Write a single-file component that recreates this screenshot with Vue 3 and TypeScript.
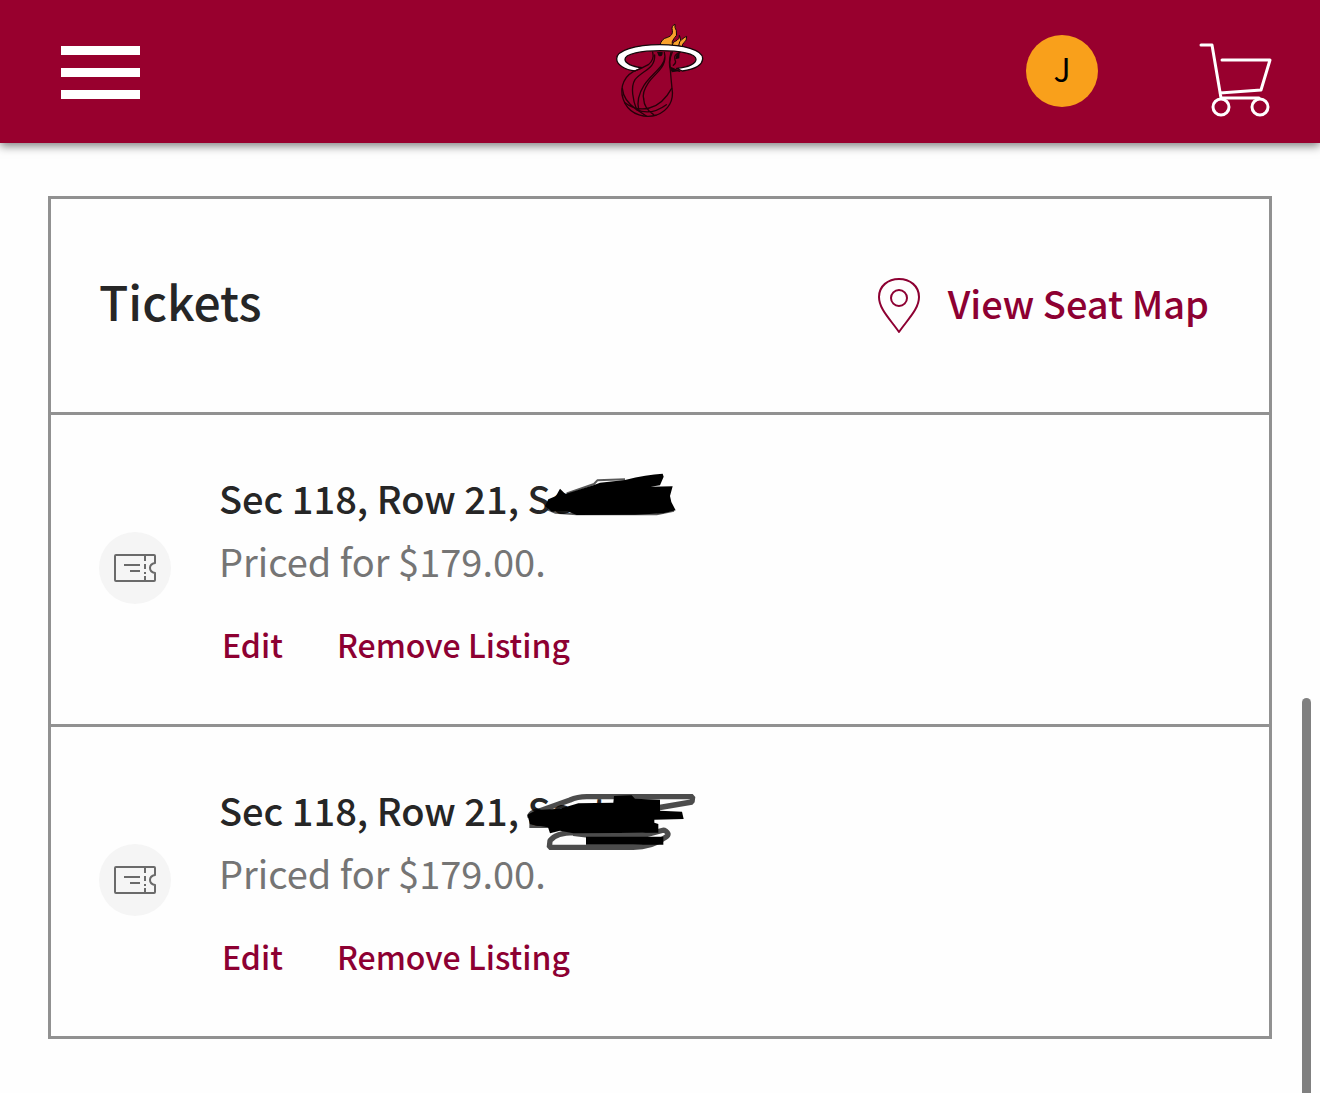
<script setup lang="ts">
interface Stroke {
  d: string
  width: number
  opacity: number
}

interface Ticket {
  id: number
  seat: string
  price: string
  viewBox: string
  marks: Stroke[]
  fills: string[]
}

const tickets: Ticket[] = [
  {
    id: 1,
    seat: 'Sec 118, Row 21, Seat',
    price: '$179.00',
    viewBox: '0 0 600 240',
    marks: [
      { d: 'M112 148 L135 158 L200 163 L440 163 L492 152', width: 6, opacity: 0.65 },
      { d: 'M170 100 L252 72 L262 61 L345 58', width: 6, opacity: 0.65 },
    ],
    fills: [
      'M105 138 L115 118 L138 108 L150 86 L166 102 L250 76 L270 68 L345 60 Q410 43 458 41 L461 50 L450 76 L422 80 L488 79 L480 108 L484 126 L497 151 L460 160 L375 164 L200 165 L172 154 L125 155 Z',
    ],
  },
  {
    id: 2,
    seat: 'Sec 118, Row 21, Seat',
    price: '$179.00',
    viewBox: '0 -24 600 240',
    marks: [
      { d: 'M60 112 Q58 96 90 92 L180 60 Q202 50 230 50 L548 50 L546 66 L440 84', width: 16, opacity: 0.7 },
      { d: 'M58 136 L120 136', width: 16, opacity: 0.7 },
      { d: 'M190 160 L240 166 L400 166 L462 150 Q484 162 466 172 Q425 202 370 202 L118 202 L120 182 Q140 156 200 158', width: 16, opacity: 0.7 },
      { d: 'M228 182 L460 182', width: 24, opacity: 1 },
    ],
    fills: [
      'M52 104 L80 90 L150 86 L205 70 L310 68 L312 48 L365 46 L375 56 L450 59 L450 92 L516 95 L521 117 L433 119 L433 128 L445 132 L445 158 L190 160 L150 152 L120 160 L114 142 L60 133 Z',
    ],
  },
]
</script>

<template>
  <header class="topbar">
    <button class="icon-button menu" type="button" aria-label="Menu">
      <span class="bar"></span><span class="bar"></span><span class="bar"></span>
    </button>
    <a class="logo" href="#" aria-label="Home">
      <svg viewBox="0 0 360 330" width="120" height="110" fill="none" stroke-linecap="round" stroke-linejoin="round">
        <g fill="#f9a12b" stroke="#15070a" stroke-width="3">
          <path d="M180 91 Q183 71 203 67 Q220 61 217 46 Q213 33 225 28 Q223 38 229 47 Q234 62 221 72 Q214 79 217 91 Z" />
          <path d="M216 91 Q218 79 231 76 Q240 71 238 61 Q247 78 236 92 Z" />
          <path d="M236 92 Q237 78 246 73 Q256 65 260 64 Q261 77 252 83 Q246 87 247 94 Z" />
        </g>
        <path
          d="M126 158 C95 155 75 145 75 133 C75 116 125 107 181 107 C240 107 288 116 288 133 C288 146 265 157 230 160 L247 168 C285 163 308 150 308 130 C308 105 250 89 180 89 C105 89 50 107 50 131 C50 150 75 164 105 168 Z"
          fill="#fff" stroke="#15070a" stroke-width="4"
        />
        <g stroke="#260009" stroke-width="4">
          <path d="M158 111 Q164 134 145 149 Q124 161 101 169 C64 190 57 231 75 265 C94 300 137 311 170 300 C207 286 222 255 216 220 Q213 190 211 165 Q205 142 213 112" />
          <path d="M193 112 C204 157 164 174 144 205 Q126 232 131 252 M195 124 C193 157 154 176 132 211 Q108 249 116 284" />
          <path d="M164 120 C166 163 127 165 105 194 C91 216 99 257 110 284 L139 303" />
          <path d="M67 220 Q70 257 110 284 Q153 303 199 269 M75 263 Q108 289 148 279 Q188 269 215 220 M131 252 Q132 280 161 299" />
          <path d="M217 111 Q203 142 214 166 M211 157 L239 169 M240 112 Q219 119 225 135 Q230 143 220 151" />
        </g>
        <path d="M171 111 L188 111 Q189 127 176 123 Z M229 121 L239 111 L238 130 L226 133 Z" fill="#15070a" />
        <path d="M213 160 L242 168 L215 172 Z" fill="#15070a" />
      </svg>
    </a>
    <nav class="actions" aria-label="Account">
      <button class="icon-button avatar" type="button">J</button>
      <a class="cart" href="#" aria-label="Cart">
        <svg viewBox="0 0 74 76" width="74" height="76" fill="none" stroke="#fff" stroke-width="3" stroke-linecap="round" stroke-linejoin="round">
          <path d="M2 3 H13 L22 56 H60 M23 18 H71 L62 48 L21 51" />
          <circle cx="22" cy="65" r="8" />
          <circle cx="61" cy="65" r="8" />
        </svg>
      </a>
    </nav>
  </header>

  <main class="page">
    <section class="card" aria-labelledby="tickets-title">
      <div class="card-head">
        <h1 id="tickets-title">Tickets</h1>
        <a class="seat-map" href="#">
          <svg viewBox="0 0 42 56" width="42" height="56" fill="none" stroke="currentColor" stroke-width="2" stroke-linejoin="round">
            <path d="M21 54 C12 41 1 31 1 19 C1 8 10 1 21 1 S41 8 41 19 C41 31 30 41 21 54 Z" />
            <circle cx="21" cy="20" r="8" />
          </svg>
          <span>View Seat Map</span>
        </a>
      </div>

      <article v-for="ticket in tickets" :key="ticket.id" class="ticket">
        <div class="badge">
          <svg viewBox="0 0 44 30" width="44" height="30" fill="none" stroke="#6a6a6a" stroke-width="2" stroke-linejoin="round">
            <path d="M3 2 H41 Q42 2 42 3 V10 Q37 11 37 15 Q37 19 42 20 V27 Q42 28 41 28 H3 Q2 28 2 27 V3 Q2 2 3 2 Z" />
            <path d="M11 12 H27 M17 18 H27" />
            <path d="M32 2 V8 M32 11 V16 M32 19 V21 M32 23 V28" />
          </svg>
        </div>
        <div class="details">
          <h2>
            {{ ticket.seat }}
            <svg class="scribble" :viewBox="ticket.viewBox" width="200" height="80" aria-hidden="true">
              <path
                v-for="mark in ticket.marks" :key="mark.d" :d="mark.d" fill="none" stroke="#000"
                :stroke-width="mark.width" :stroke-opacity="mark.opacity" stroke-linejoin="bevel"
              />
              <path v-for="shape in ticket.fills" :key="shape" :d="shape" />
            </svg>
          </h2>
          <p>Priced for {{ ticket.price }}.</p>
          <div class="links">
            <button type="button">Edit</button>
            <button type="button">Remove Listing</button>
          </div>
        </div>
      </article>
    </section>
  </main>
  <div class="scroll-thumb" aria-hidden="true"></div>
</template>

<style>
body {
  margin: 0;
  background: #fefefe;
}
</style>

<style scoped>
.topbar,
.page,
button {
  font-family: "Noto Sans CJK SC", "Noto Sans", sans-serif;
}

.topbar {
  display: grid;
  grid-template-columns: 1fr auto 1fr;
  align-items: center;
  height: 143px;
  padding: 0 47px 0 61px;
  box-sizing: border-box;
  background: #98002e;
  box-shadow: 0 3px 9px rgba(0, 0, 0, 0.5);
}

.icon-button {
  border: 0;
  padding: 0;
  background: none;
}

.menu {
  display: flex;
  flex-direction: column;
  gap: 13px;
  width: 79px;
  margin-top: 2px;
}

.bar {
  height: 9px;
  background: #fff;
}

.logo {
  display: block;
  height: 110px;
  margin: 0 14px 3px 0;
}

.actions {
  display: flex;
  justify-content: flex-end;
  align-items: center;
  gap: 101px;
}

.avatar {
  width: 72px;
  height: 72px;
  margin-bottom: 2px;
  padding-bottom: 6px;
  border-radius: 50%;
  background: #f9a01b;
  color: #000;
  font-size: 32px;
  line-height: 66px;
}

.cart {
  height: 76px;
  padding-top: 16px;
}

.page {
  padding: 53px 48px;
}

.card {
  border: 3px solid #919191;
}

.card-head {
  display: flex;
  align-items: center;
  justify-content: space-between;
  height: 213px;
  padding: 0 60px 0 48px;
}

h1,
h2,
p {
  margin: 0;
}

h1 {
  margin-bottom: 12px;
  color: #262626;
  font-size: 48px;
  font-weight: 500;
  line-height: 72px;
}

.seat-map {
  display: flex;
  align-items: center;
  gap: 28px;
  color: #8d0032;
  font-size: 38px;
  font-weight: 500;
  line-height: 60px;
  text-decoration: none;
}

.seat-map span {
  margin-bottom: 6px;
}

.ticket {
  display: flex;
  align-items: center;
  gap: 48px;
  padding: 53px 48px 56px;
  border-top: 3px solid #919191;
}

.badge {
  display: flex;
  align-items: center;
  justify-content: center;
  width: 72px;
  height: 72px;
  border-radius: 50%;
  background: #f5f5f5;
}

h2 {
  position: relative;
  color: #262626;
  font-size: 38px;
  font-weight: 500;
  line-height: 60px;
}

.scribble {
  position: absolute;
  top: -8px;
  left: 291px;
}

p {
  color: #757575;
  font-size: 38px;
  font-weight: 400;
  line-height: 66px;
}

.links {
  display: flex;
  gap: 54px;
  margin-top: 26px;
  padding-left: 3px;
}

.links button {
  border: 0;
  padding: 0;
  background: none;
  color: #8d0032;
  font-size: 32px;
  font-weight: 500;
  line-height: 48px;
}

.scroll-thumb {
  position: fixed;
  right: 9px;
  bottom: 0;
  width: 9px;
  height: 395px;
  border-radius: 5px 5px 0 0;
  background: #808080;
}
</style>
